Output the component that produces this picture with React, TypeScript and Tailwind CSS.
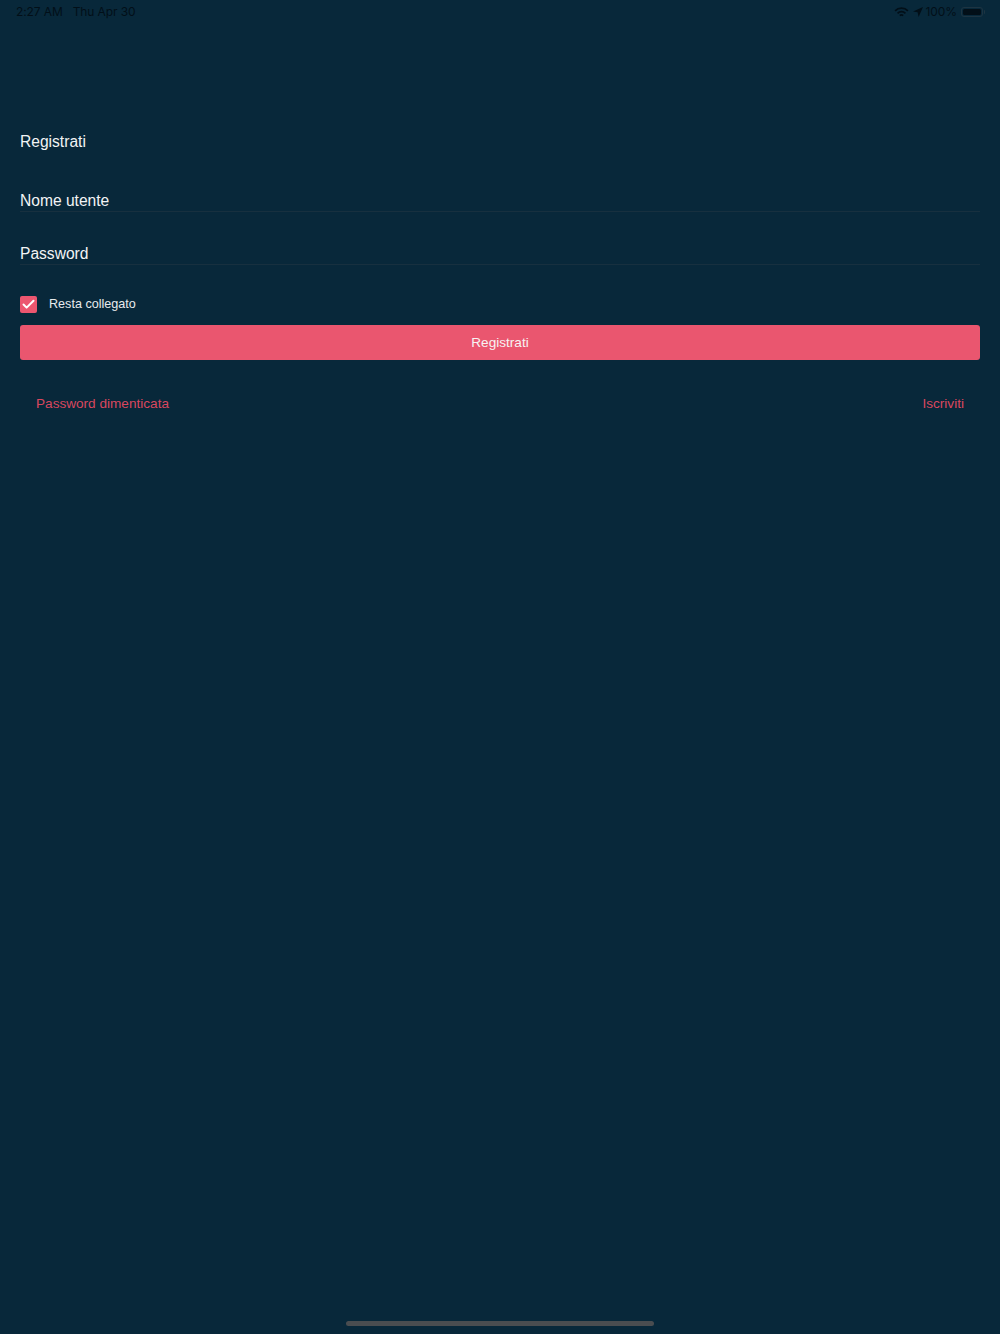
import { Check } from "lucide-react";

const StatusBar = () => (
  <div className="flex h-6 items-center justify-between pl-4 pr-[15px] font-['Inter',sans-serif] text-[12px] leading-none tracking-[-0.1px] text-[#020f18]">
    <div className="flex gap-[10px]">
      <span>2:27 AM</span>
      <span>Thu Apr 30</span>
    </div>
    <div className="flex items-center">
      <svg className="mr-[4px] h-[11px] w-[15px]" viewBox="0 0 16 12" fill="none" stroke="#020f18" strokeWidth="1.9">
        <path d="M1 4.2a10 10 0 0 1 14 0" />
        <path d="M3.7 6.9a6.2 6.2 0 0 1 8.6 0" />
        <path d="M6.2 9.4a2.6 2.6 0 0 1 3.6 0" />
      </svg>
      <svg className="mr-[3px] h-[10px] w-[10px]" viewBox="0 0 10 10" fill="#020f18">
        <path d="M10 0 0 4.4l4.6.9L5.6 10z" />
      </svg>
      <span>100%</span>
      <div className="ml-[4px] flex items-center">
        <div className="h-[10px] w-[22px] rounded-[3px] border border-[#1d3442] p-px">
          <div className="h-full w-full rounded-[1.5px] bg-[#020f18]" />
        </div>
        <div className="ml-px h-1 w-px rounded-r-sm bg-[#1d3442]" />
      </div>
    </div>
  </div>
);

const Field = ({ label }: { label: string }) => (
  <div className="border-b border-[#17303f] pt-[2px] text-[15.6px] leading-[20px] text-[#f2f4f5]">
    {label}
  </div>
);

export default function App() {
  return (
    <div
      className="flex h-[1334px] w-full flex-col bg-[#08283a]"
      style={{ fontFamily: '"Liberation Sans", Arial, sans-serif' }}
    >
      <StatusBar />

      <div className="flex flex-col px-5 pt-[106px]">
        <h1 className="text-[15.6px] leading-[24px] font-normal text-[#f2f4f5]">Registrati</h1>

        <div className="mt-[35px] flex flex-col gap-[30px]">
          <Field label="Nome utente" />
          <Field label="Password" />
        </div>

        <div className="mt-[30px] flex items-center gap-3">
          <div className="flex size-[17px] items-center justify-center rounded-[2px] bg-[#ec566f]">
            <Check className="size-[15px] text-white" strokeWidth={3.2} />
          </div>
          <span className="text-[12.6px] leading-[18px] text-[#e8ebed]">Resta collegato</span>
        </div>

        <button
          className="mt-[12px] h-[35px] w-full rounded-[3px] bg-[#ea566f] pt-[2px] text-[13.6px] text-[#f7f2f3]"
          type="button"
        >
          Registrati
        </button>

        <div className="mt-[35px] flex justify-between px-4 text-[13.6px] leading-[18px] text-[#d8475f]">
          <span>Password dimenticata</span>
          <span>Iscriviti</span>
        </div>
      </div>

      <div className="mt-auto mb-[8px] h-[5px] w-[308px] self-center rounded-full bg-[#4a4d50]" />
    </div>
  );
}
